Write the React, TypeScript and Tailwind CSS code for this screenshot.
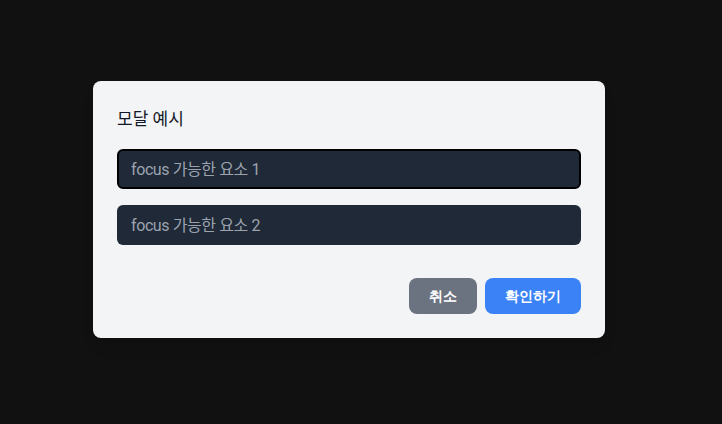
import { useEffect, useRef } from "react";

export default function App() {
  const firstRef = useRef<HTMLInputElement>(null);

  useEffect(() => {
    firstRef.current?.focus();
  }, []);

  return (
    <div
      className="min-h-[424px] bg-[#111111] pl-[93px] pt-[81px]"
      style={{ fontFamily: 'Roboto, "Noto Sans CJK KR", sans-serif' }}
    >
      <div className="w-[512px] rounded-lg bg-[#f3f4f6] p-6 shadow-lg">
        <h2 className="mb-4 text-[17px] leading-7 text-[#111827]">모달 예시</h2>
        <div className="space-y-4">
          <input
            ref={firstRef}
            type="text"
            placeholder="focus 가능한 요소 1"
            className="block h-10 w-full rounded-md border-2 border-transparent bg-[#1f2937] px-3 text-base tracking-[-0.025em] text-gray-200 placeholder:text-[#9ca3af] focus:border-black focus:outline-none"
          />
          <input
            type="text"
            placeholder="focus 가능한 요소 2"
            className="block h-10 w-full rounded-md border-2 border-transparent bg-[#1f2937] px-3 text-base tracking-[-0.025em] text-gray-200 placeholder:text-[#9ca3af] focus:border-black focus:outline-none"
          />
        </div>
        <div className="mt-[33px] flex justify-end gap-2 font-sans">
          <button
            type="button"
            className="h-9 rounded-lg bg-[#6b7280] px-5 text-sm font-semibold text-white"
          >
            취소
          </button>
          <button
            type="button"
            className="h-9 rounded-lg bg-[#3b82f6] px-5 text-sm font-semibold text-white"
          >
            확인하기
          </button>
        </div>
      </div>
    </div>
  );
}
